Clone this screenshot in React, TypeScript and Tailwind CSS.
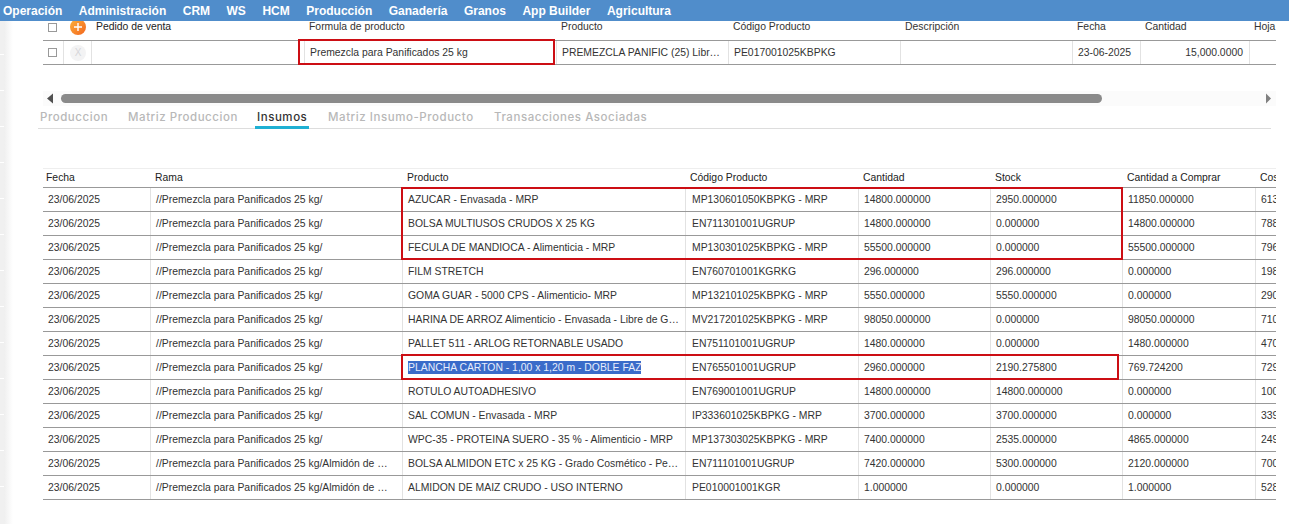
const sans = "font-['Liberation_Sans',Arial,sans-serif]";

const menu = [
  "Operación",
  "Administración",
  "CRM",
  "WS",
  "HCM",
  "Producción",
  "Ganadería",
  "Granos",
  "App Builder",
  "Agricultura",
];

const tabs = [
  { label: "Produccion", width: "w-[88px]" },
  { label: "Matriz Produccion", width: "w-[129px]" },
  { label: "Insumos", width: "w-[71px]" },
  { label: "Matriz Insumo-Producto", width: "w-[166px]" },
  { label: "Transacciones Asociadas", width: "w-[170px]" },
];

const branch = "//Premezcla para Panificados 25 kg/";
const branchLong = "//Premezcla para Panificados 25 kg/Almidón de …";

const rows = [
  [branch, "AZUCAR - Envasada - MRP", "MP130601050KBPKG - MRP", "14800.000000", "2950.000000", "11850.000000", "613"],
  [branch, "BOLSA MULTIUSOS CRUDOS X 25 KG", "EN711301001UGRUP", "14800.000000", "0.000000", "14800.000000", "788"],
  [branch, "FECULA DE MANDIOCA - Alimenticia - MRP", "MP130301025KBPKG - MRP", "55500.000000", "0.000000", "55500.000000", "796"],
  [branch, "FILM STRETCH", "EN760701001KGRKG", "296.000000", "296.000000", "0.000000", "198"],
  [branch, "GOMA GUAR - 5000 CPS - Alimenticio- MRP", "MP132101025KBPKG - MRP", "5550.000000", "5550.000000", "0.000000", "290"],
  [branch, "HARINA DE ARROZ Alimenticio - Envasada - Libre de G…", "MV217201025KBPKG - MRP", "98050.000000", "0.000000", "98050.000000", "710"],
  [branch, "PALLET 511 - ARLOG RETORNABLE USADO", "EN751101001UGRUP", "1480.000000", "0.000000", "1480.000000", "470"],
  [branch, "PLANCHA CARTON - 1,00 x 1,20 m - DOBLE FAZ", "EN765501001UGRUP", "2960.000000", "2190.275800", "769.724200", "729"],
  [branch, "ROTULO AUTOADHESIVO", "EN769001001UGRUP", "14800.000000", "14800.000000", "0.000000", "100"],
  [branch, "SAL COMUN - Envasada - MRP", "IP333601025KBPKG - MRP", "3700.000000", "3700.000000", "0.000000", "339"],
  [branch, "WPC-35 - PROTEINA SUERO - 35 % - Alimenticio - MRP", "MP137303025KBPKG - MRP", "7400.000000", "2535.000000", "4865.000000", "249"],
  [branchLong, "BOLSA ALMIDON ETC x 25 KG - Grado Cosmético - Pe…", "EN711101001UGRUP", "7420.000000", "5300.000000", "2120.000000", "700"],
  [branchLong, "ALMIDON DE MAIZ CRUDO - USO INTERNO", "PE010001001KGR", "1.000000", "0.000000", "1.000000", "528"],
];

const gridCols = "grid grid-cols-[108px_252px_283px_173px_132px_132px_133px_20px]";

function Sidebar() {
  return (
    <div className="flex shrink-0">
      <div className="w-[4px] flex flex-col bg-[#f0f0f0]">
        <div className="h-[34px] border-b border-white" />
        {[0, 1, 2, 3, 4, 5, 6, 7, 8, 9, 10, 11].map((n) => (
          <div key={n} className="h-[36px] border-b border-white" />
        ))}
      </div>
      <div className="w-[9px] bg-gradient-to-r from-[#efefef] to-white" />
    </div>
  );
}

function TopTable() {
  return (
    <div className="w-[1233px] overflow-hidden text-[10.4px]">
      <div className="h-[19px] flex items-start text-[#333333] leading-[12px]">
        <div className="w-[21px] pl-[5px] pt-[2px]">
          <div className="w-[9px] h-[9px] border border-[#999999] bg-white" />
        </div>
        <div className="w-[28px] pl-[6px]">
          <div className="w-4 h-4 -mt-[2px] rounded-full bg-gradient-to-br from-[#fbb03b] to-[#f2641e] flex items-center justify-center">
            <svg width="10" height="10" viewBox="0 0 10 10">
              <path d="M5 1v8M1 5h8" stroke="#ffffff" strokeWidth="1.4" />
            </svg>
          </div>
        </div>
        <div className="w-[213px] pl-[4px] text-[#222222]">Pedido de venta</div>
        <div className="w-[252px] pl-[4px]">Formula de producto</div>
        <div className="w-[172px] pl-[4px]">Producto</div>
        <div className="w-[172px] pl-[4px]">Código Producto</div>
        <div className="w-[172px] pl-[4px]">Descripción</div>
        <div className="w-[68px] pl-[4px]">Fecha</div>
        <div className="w-[109px] pl-[4px]">Cantidad</div>
        <div className="w-[26px] pl-[4px] whitespace-nowrap overflow-hidden">Hoja</div>
      </div>
      <div className="h-[25px] flex items-stretch border-y border-[#999999] text-[#333333]">
        <div className="w-[21px] pl-[5px] flex items-center border-r border-[#e2e2e2]">
          <div className="w-[9px] h-[9px] border border-[#999999] bg-white" />
        </div>
        <div className="w-[28px] pl-[6px] flex items-center border-r border-[#e2e2e2]">
          <div className="w-4 h-4 rounded-full bg-[#f3f3f4] text-[#d6d6da] flex items-center justify-center text-[10px]">
            X
          </div>
        </div>
        <div className="w-[213px] border-r border-[#e2e2e2]" />
        <div className="w-[252px] relative flex items-center pl-[5px] border-r border-[#e2e2e2]">
          Premezcla para Panificados 25 kg
          <div className="absolute -left-[7px] -top-[2px] w-[257px] h-[26px] border-2 border-[#cc0e14]" />
        </div>
        <div className="w-[172px] flex items-center px-[5px] border-r border-[#e2e2e2] whitespace-nowrap overflow-hidden">
          PREMEZCLA PANIFIC (25) Libr…
        </div>
        <div className="w-[172px] flex items-center pl-[5px] border-r border-[#e2e2e2]">PE017001025KBPKG</div>
        <div className="w-[172px] border-r border-[#e2e2e2]" />
        <div className="w-[68px] flex items-center pl-[5px] border-r border-[#e2e2e2] whitespace-nowrap">23-06-2025</div>
        <div className="w-[109px] flex items-center justify-end pr-[6px] border-r border-[#e2e2e2]">15,000.0000</div>
        <div className="flex-1" />
      </div>
    </div>
  );
}

function Scrollbar() {
  return (
    <div className="w-[1233px] h-[15px] mt-[26px] flex items-center bg-[#fbfbfb]">
      <svg width="18" height="15" viewBox="0 0 18 15" className="shrink-0">
        <polygon points="4,7.5 10,2.5 10,12.5" fill="#505050" />
      </svg>
      <div className="w-[1041px] h-[9px] rounded-full bg-[#8a8a8a]" />
      <div className="flex-1" />
      <svg width="11" height="15" viewBox="0 0 11 15" className="shrink-0">
        <polygon points="1,2.5 6,7.5 1,12.5" fill="#808080" />
      </svg>
    </div>
  );
}

function Tabs() {
  return (
    <div className="w-[1233px] h-[23px] -ml-[5px] pl-[2px] flex border-b border-[#dddddd] font-['Inter',sans-serif] font-medium text-[11.5px] tracking-[0.55px]">
      {tabs.map((t) => (
        <div key={t.label} className={`${t.width} relative leading-[22px] ${t.label === "Insumos" ? "text-[#333333]" : "text-[#b8b8b8]"}`}>
          {t.label}
          {t.label === "Insumos" && <div className="absolute -left-[2px] w-[54px] top-[20px] h-[3px] bg-[#1fb0d3]" />}
        </div>
      ))}
    </div>
  );
}

function DetailTable() {
  return (
    <div className="w-[1233px] mt-[39px] overflow-hidden relative text-[10.4px] text-[#333333]">
      <div className={`${gridCols} h-[19px] items-center border-t border-[#eeeeee] text-[#222222]`}>
        <div className="pl-[3px]">Fecha</div>
        {["Rama", "Producto", "Código Producto", "Cantidad", "Stock", "Cantidad a Comprar", "Costo"].map((h) => (
          <div key={h} className="pl-[4px] whitespace-nowrap overflow-hidden">{h}</div>
        ))}
      </div>
      {rows.map((r, i) => (
        <div key={i} className={`${gridCols} items-stretch border-t border-[#999999] ${i === rows.length - 1 ? "border-b h-[25px]" : "h-[24px]"}`}>
          <div className="flex items-center pl-[5px] border-r border-[#e2e2e2]">23/06/2025</div>
          <div className="flex items-center pl-[5px] border-r border-[#e2e2e2] whitespace-nowrap overflow-hidden">{r[0]}</div>
          <div className="flex items-center pl-[5px] border-r border-[#e2e2e2] whitespace-nowrap overflow-hidden">
            {i === 7 ? <span className="bg-[#3a6bc9] text-[#e8eefc] leading-[13px]">{r[1]}</span> : r[1]}
          </div>
          <div className="flex items-center pl-[6px] border-r border-[#e2e2e2] whitespace-nowrap overflow-hidden">{r[2]}</div>
          <div className="flex items-center pl-[5px] border-r border-[#e2e2e2]">{r[3]}</div>
          <div className="flex items-center pl-[5px] border-r border-[#e2e2e2]">{r[4]}</div>
          <div className="flex items-center pl-[5px] border-r border-[#e2e2e2]">{r[5]}</div>
          <div className="flex items-center pl-[5px] overflow-hidden">{r[6]}</div>
        </div>
      ))}
      <div className="absolute left-[358px] top-[19px] w-[722px] h-[73px] border-2 border-[#cc0e14] pointer-events-none" />
      <div className="absolute left-[358px] top-[186px] w-[718px] h-[26px] border-2 border-[#cc0e14] pointer-events-none" />
    </div>
  );
}

export default function App() {
  return (
    <div className={`w-[1289px] h-[524px] overflow-hidden bg-white flex flex-col ${sans}`}>
      <div className="relative z-10 h-[21px] shrink-0 bg-[#508dcb] flex items-center gap-[16.5px] pl-[3px] text-white font-bold text-[12px]">
        {menu.map((m) => (
          <span key={m}>{m}</span>
        ))}
      </div>
      <div className="flex flex-1 min-h-0">
        <Sidebar />
        <div className="pl-[30px] flex flex-col">
          <TopTable />
          <Scrollbar />
          <Tabs />
          <DetailTable />
        </div>
      </div>
    </div>
  );
}
